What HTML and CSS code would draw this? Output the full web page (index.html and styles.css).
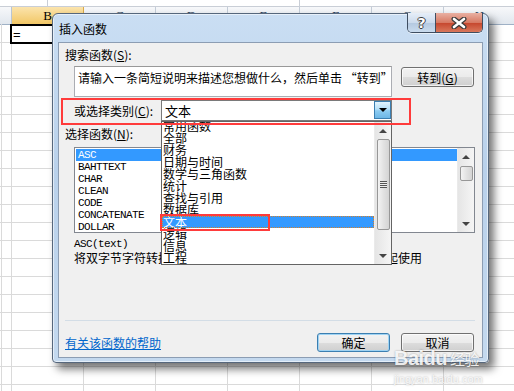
FILE: index.html
```html
<!DOCTYPE html>
<html>
<head>
<meta charset="utf-8">
<title>插入函数</title>
<link rel="stylesheet" href="styles.css">
</head>

<body>
<div id="sheet">
	<div class="formula-bar">
		<span class="fb-name"></span>
		<span class="fb-mid"></span>
	</div>
	<div class="col-heads">
		<div class="corner"></div>
		<div class="col-head sel">B</div>
		<div class="col-head">C</div>
		<div class="col-head">D</div>
		<div class="col-head">E</div>
		<div class="col-head">F</div>
		<div class="col-head">G</div>
		<div class="col-head">H</div>
	</div>
	<div class="grid">
		<div class="active-cell">=</div>
	</div>
</div>

<div id="dialog">
	<div class="titlebar">
		<span class="title">插入函数</span>
		<div class="caption-btns">
			<div class="cap help">?</div>
			<div class="cap close">
				<svg width="18" height="12" viewBox="0 0 18 12">
					<path d="M4 2 L14 10 M14 2 L4 10" stroke="#3b3b3b" stroke-width="5" stroke-linecap="round"/>
					<path d="M4 2 L14 10 M14 2 L4 10" stroke="#fff" stroke-width="2.6" stroke-linecap="round"/>
				</svg>
			</div>
		</div>
	</div>
	<div class="client">
		<div class="label first">搜索函数(<u>S</u>):</div>
		<div class="search-row">
			<div class="search-box">请输入一条简短说明来描述您想做什么，然后单击 “转到”</div>
			<button class="btn go">转到(<u>G</u>)</button>
		</div>
		<div class="cat-row">
			<span class="cat-label">或选择类别(<u>C</u>):</span>
			<div class="select">
				<span class="select-text">文本</span>
				<span class="select-arrow"><span class="tri-down"></span></span>
				<div class="dropdown">
					<div class="dd-items">
						<div class="dd-item">常用函数</div>
						<div class="dd-item">全部</div>
						<div class="dd-item">财务</div>
						<div class="dd-item">日期与时间</div>
						<div class="dd-item">数学与三角函数</div>
						<div class="dd-item">统计</div>
						<div class="dd-item">查找与引用</div>
						<div class="dd-item">数据库</div>
						<div class="dd-item sel">文本</div>
						<div class="dd-item">逻辑</div>
						<div class="dd-item">信息</div>
						<div class="dd-item">工程</div>
					</div>
					<div class="scrollbar">
						<span class="sb-arrow"><span class="tri-up"></span></span>
						<span class="thumb big"><span class="grip"></span></span>
						<span class="sb-fill"></span>
						<span class="sb-arrow"><span class="tri-down small"></span></span>
					</div>
				</div>
			</div>
		</div>
		<div class="label">选择函数(<u>N</u>):</div>
		<div class="fn-list">
			<div class="fn-items">
				<div class="fn-item sel">ASC</div>
				<div class="fn-item">BAHTTEXT</div>
				<div class="fn-item">CHAR</div>
				<div class="fn-item">CLEAN</div>
				<div class="fn-item">CODE</div>
				<div class="fn-item">CONCATENATE</div>
				<div class="fn-item">DOLLAR</div>
			</div>
			<div class="scrollbar">
				<span class="sb-arrow"><span class="tri-up"></span></span>
				<span class="thumb"></span>
				<span class="sb-fill"></span>
				<span class="sb-arrow"><span class="tri-down small"></span></span>
			</div>
		</div>
		<div class="syntax">ASC(text)</div>
		<div class="desc">将双字节字符转换成单字节字符。与双字节字符集<span class="latin">(DBCS)</span>一起使用</div>
		<div class="separator"></div>
		<div class="footer">
			<a class="help-link">有关该函数的帮助</a>
			<div class="btns">
				<button class="btn default">确定</button>
				<button class="btn">取消</button>
			</div>
		</div>

		<div class="mark mark-cat"></div>
		<div class="mark mark-item"></div>
	</div>
</div>

<div id="watermark">
	<div class="wm-logo">Baidu<span class="wm-cn">经验</span></div>
	<div class="wm-url">jingyan.baidu.com</div>
</div>
</body>
</html>
```

FILE: styles.css
```css
html, body {
	margin: 0px;
	padding: 0px;
}
body {
	width: 514px;
	height: 391px;
	overflow: hidden;
	position: relative;
	background: #fff;
	font-family: "Noto Sans CJK SC", sans-serif;
	font-size: 12px;
	color: #000;
}

/* 背景的工作表 */
#sheet {
	width: 514px;
	height: 391px;
}
.formula-bar {
	display: flex;
	height: 6px;
	border-bottom: 1px solid #c9ced6;
}
.fb-name {
	width: 47px;
	border-right: 1px solid #c9ced6;
}
.fb-mid {
	width: 251px;
	border-right: 1px solid #c9ced6;
}
.col-heads {
	display: flex;
	height: 17px;
	border-bottom: 1px solid #9fb1c6;
	background: linear-gradient(#f7f8fa, #e1e7ee);
}
.corner {
	width: 12px;
	flex: none;
	box-sizing: border-box;
	border-right: 1px solid #b9c5d3;
}
.col-head {
	width: 72px;
	flex: none;
	box-sizing: border-box;
	border-right: 1px solid #c3ccd7;
	text-align: center;
	font-family: "Liberation Serif", serif;
	font-size: 13px;
	line-height: 17px;
	color: #2a3f5a;
}
.col-head.sel {
	background: linear-gradient(#fbe4ad, #f2c766);
	border-right-color: #d9a94a;
	color: #000;
}
.grid {
	height: 367px;
	background-image:
		repeating-linear-gradient(to right, #dadada 0px, #dadada 1px, transparent 1px, transparent 72px),
		repeating-linear-gradient(to bottom, transparent 0px, transparent 17px, #dadada 17px, #dadada 18px);
	background-position: 11px 0px, 0px 1px;
}
.active-cell {
	width: 74px;
	height: 20px;
	margin: -1px 0 0 10px;
	box-sizing: border-box;
	border: 2px solid #000;
	padding-left: 1px;
	font-family: "Liberation Sans", sans-serif;
	font-size: 13px;
	line-height: 17px;
}

/* 对话框 */
#dialog {
	position: absolute;
	left: 52px;
	top: 13px;
	width: 437px;
	height: 350px;
	box-sizing: border-box;
	border: 1px solid #56677c;
	border-radius: 6px 6px 4px 4px;
	background: linear-gradient(#cadef3, #b9d1eb 45%, #c4d9ef);
	box-shadow: 5px 6px 8px rgba(0,0,0,0.55), inset 0 0 0 1px rgba(255,255,255,0.55);
	padding: 0px 5px 4px 5px;
	display: flex;
	flex-direction: column;
}
.titlebar {
	height: 28px;
	flex: none;
	display: flex;
	align-items: flex-start;
}
.title {
	margin: 8px 0 0 1px;
	font-size: 12px;
	line-height: 14px;
}
.caption-btns {
	margin: -1px 0 0 auto;
	display: flex;
	border: 1px solid #3f4e61;
	border-top: none;
	border-radius: 0 0 5px 5px;
	overflow: hidden;
	box-shadow: 0 1px 0 rgba(255,255,255,0.6);
}
.cap {
	height: 19px;
	display: flex;
	align-items: center;
	justify-content: center;
}
.cap.help {
	width: 27px;
	border-right: 1px solid #3f4e61;
	background: linear-gradient(#e6eef8, #ccdbed 50%, #b3c8e0 51%, #c9dbee);
	color: #fff;
	font-family: "DejaVu Sans", sans-serif;
	font-weight: bold;
	font-size: 14px;
	text-shadow: -1px 0 #3d3d3d, 1px 0 #3d3d3d, 0 -1px #3d3d3d, 0 1px #3d3d3d;
}
.cap.close {
	width: 46px;
	background: linear-gradient(#e9b0a2, #d77a64 50%, #c5452c 51%, #d9785c);
}

.client {
	flex: 1;
	position: relative;
	box-sizing: border-box;
	border: 1px solid #8c9db3;
	background: #f0f0f0;
}
.label {
	line-height: 14px;
	padding-left: 6px;
	margin-top: 6px;
}
.label.first {
	margin-top: 5px;
}
.search-row {
	display: flex;
	margin-top: 4px;
	padding-left: 15px;
}
.search-box {
	width: 318px;
	height: 31px;
	box-sizing: border-box;
	border: 1px solid #abadb3;
	border-top-color: #999;
	background: #fff;
	padding: 4px 0 0 3px;
	line-height: 14px;
	white-space: nowrap;
	overflow: hidden;
}
.btn {
	width: 73px;
	height: 19px;
	padding: 0;
	font-family: "Noto Sans CJK SC", sans-serif;
	font-size: 12px;
	line-height: 15px;
	color: #000;
	border: 1px solid #707070;
	border-radius: 3px;
	background: linear-gradient(#f2f2f2, #ebebeb 50%, #dddddd 51%, #cfcfcf);
	box-shadow: inset 0 0 0 1px rgba(255,255,255,0.7);
}
.btn.go {
	height: 20px;
	margin: 1px 0 0 9px;
}
.btn.default {
	border-color: #3c7fb1;
	box-shadow: inset 0 0 0 1px #9fd3f3;
}
.cat-row {
	display: flex;
	align-items: center;
	margin-top: 3px;
	padding-left: 15px;
}
.cat-label {
	width: 87px;
	line-height: 14px;
}
.select {
	position: relative;
	width: 231px;
	height: 21px;
	box-sizing: border-box;
	border: 1px solid #7a7a7a;
	background: #fff;
	display: flex;
}
.select-text {
	flex: 1;
	padding-left: 3px;
	font-size: 13px;
	line-height: 19px;
}
.select-arrow {
	width: 17px;
	height: 18px;
	box-sizing: border-box;
	border: 1px solid #3c7fb1;
	background: linear-gradient(#e3f4fd, #b6e0f8 45%, #8ccbf1 55%, #6db7e6);
	display: flex;
	align-items: center;
	justify-content: center;
}
.tri-down {
	width: 0;
	height: 0;
	border-left: 4px solid transparent;
	border-right: 4px solid transparent;
	border-top: 4px solid #000;
}
.tri-down.small {
	border-top-color: #444;
}
.tri-up {
	width: 0;
	height: 0;
	border-left: 4px solid transparent;
	border-right: 4px solid transparent;
	border-bottom: 4px solid #444;
}

/* 展开的类别列表 */
.dropdown {
	position: absolute;
	left: -1px;
	top: 20px;
	width: 231px;
	height: 144px;
	box-sizing: border-box;
	border: 1px solid #646464;
	background: #fff;
	display: flex;
	overflow: hidden;
	z-index: 2;
}
.dd-items {
	flex: 1;
	margin-top: -2px;
}
.dd-item {
	height: 12px;
	line-height: 12px;
	padding-left: 1px;
	font-size: 12px;
	white-space: nowrap;
}
.dd-item.sel {
	background: #3399ff;
	color: #fff;
	outline: 1px dotted #d0802f;
	outline-offset: -1px;
}
.scrollbar {
	width: 16px;
	flex: none;
	display: flex;
	flex-direction: column;
	align-items: center;
	background: linear-gradient(to right, #e5e5e5, #f5f5f5);
	border-left: 1px solid #eaeaea;
}
.sb-arrow {
	height: 17px;
	flex: none;
	display: flex;
	align-items: center;
	justify-content: center;
}
.sb-fill {
	flex: 1;
}
.thumb {
	width: 13px;
	height: 15px;
	flex: none;
	margin-top: 1px;
	box-sizing: border-box;
	border: 1px solid #979797;
	border-radius: 2px;
	background: linear-gradient(to right, #f3f3f3, #e2e2e2 50%, #d4d4d4);
	display: flex;
	align-items: center;
	justify-content: center;
}
.thumb.big {
	height: 91px;
	margin-top: 0;
}
.grip {
	width: 7px;
	height: 7px;
	background: repeating-linear-gradient(to bottom, #555 0px, #555 1px, #eee 1px, #eee 2px);
}

/* 函数列表 */
.fn-list {
	width: 401px;
	height: 86px;
	margin: 6px 0 0 15px;
	box-sizing: border-box;
	border: 1px solid #828790;
	background: #fff;
	display: flex;
}
.fn-items {
	flex: 1;
	padding: 1px 0 0 1px;
}
.fn-item {
	height: 12px;
	line-height: 12px;
	padding-left: 2px;
	font-family: "Liberation Mono", monospace;
	font-size: 11px;
	letter-spacing: -0.6px;
}
.fn-item.sel {
	background: #3399ff;
	color: #fff;
}
.syntax {
	margin-top: 4px;
	padding-left: 15px;
	line-height: 14px;
	font-family: "Liberation Mono", monospace;
	font-size: 11px;
	letter-spacing: -0.6px;
}
.desc {
	padding-left: 15px;
	line-height: 14px;
	white-space: nowrap;
}
.latin {
	font-family: "Liberation Mono", monospace;
	font-size: 10px;
}
.separator {
	width: 410px;
	height: 1px;
	margin: 52px 0 0 6px;
	background: #d3dde6;
}
.footer {
	display: flex;
	align-items: center;
	margin-top: 12px;
	padding: 0 8px 0 6px;
}
.help-link {
	color: #0066cc;
	text-decoration: underline;
	line-height: 14px;
}
.btns {
	margin-left: auto;
	display: flex;
	gap: 11px;
}

/* 红色标注框 */
.mark {
	position: absolute;
	border: 2px solid #ff3b3b;
	box-sizing: border-box;
	z-index: 3;
}
.mark-cat {
	left: 2px;
	top: 55px;
	width: 350px;
	height: 27px;
}
.mark-item {
	left: 101px;
	top: 171px;
	width: 110px;
	height: 17px;
}

/* 水印 */
#watermark {
	position: absolute;
	left: 394px;
	top: 347px;
	color: rgba(255,255,255,0.9);
	text-shadow: 0 0 2px rgba(0,0,0,0.35);
}
.wm-logo {
	font-family: "Liberation Sans", sans-serif;
	font-weight: bold;
	font-size: 20px;
	line-height: 22px;
	letter-spacing: -0.5px;
}
.wm-cn {
	font-family: "Noto Sans CJK SC", sans-serif;
	font-size: 15px;
	font-weight: normal;
	margin-left: 3px;
}
.wm-url {
	margin-top: 3px;
	font-family: "Liberation Sans", sans-serif;
	font-size: 11px;
	line-height: 13px;
	color: rgba(255,255,255,0.85);
}
```
